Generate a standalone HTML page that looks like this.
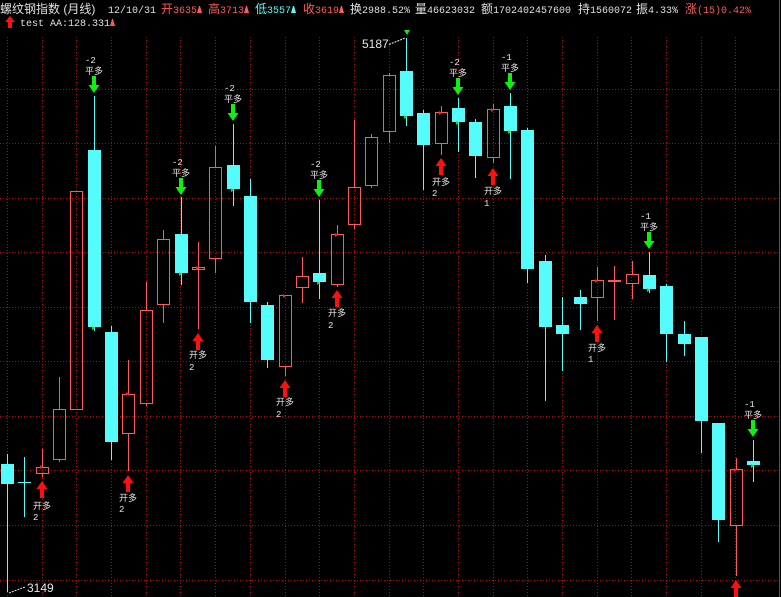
<!DOCTYPE html>
<html><head><meta charset="utf-8">
<style>
html,body{margin:0;padding:0;background:#000;width:781px;height:597px;overflow:hidden}
svg{display:block}
.t{font-family:"Liberation Mono","Noto Sans CJK SC",monospace;font-size:10px}
.c{font-family:"Liberation Sans","Noto Sans CJK SC",sans-serif;font-size:12px}
.s{font-family:"Liberation Sans","Noto Sans CJK SC",sans-serif;font-size:9px;fill:#e6e6e6}
.n{font-family:"Liberation Mono",monospace;font-size:9px;fill:#e6e6e6}
</style></head><body>
<svg width="781" height="597" viewBox="0 0 781 597" xmlns="http://www.w3.org/2000/svg">
<rect width="781" height="597" fill="#000"/>
<g stroke="#c80000" stroke-width="1" stroke-dasharray="1 2">
<path d="M0 89.5H779M0 143.5H779M0 198.5H779M0 252.5H779M0 307.5H779M0 361.5H779M0 416.5H779M0 470.5H779M0 525.5H779M0 580.5H779"/>
<path d="M7.5 37V597M42.5 37V597M76.5 37V597M111.5 37V597M146.5 37V597M180.5 37V597M215.5 37V597M250.5 37V597M285.5 37V597M319.5 37V597M354.5 37V597M389.5 37V597M423.5 37V597M458.5 37V597M493.5 37V597M527.5 37V597M562.5 37V597M597.5 37V597M631.5 37V597M666.5 37V597M701.5 37V597M735.5 37V597"/>
</g>
<line x1="779.5" y1="0" x2="779.5" y2="597" stroke="#d02020"/>

<g stroke="#54fcfc" fill="none">
<path d="M7.5 454V592M24.5 457V517M94.5 96V331M111.5 326V460M181.5 197V285M233.5 124V206M250.5 179V323M267.5 302V368M319.5 200V299M406.5 38V126M423.5 110V190M458.5 98V152M475.5 119V178M510.5 93V179M527.5 128V283M545.5 255V401M562.5 297V371M580.5 290V330M649.5 252V293M666.5 284V362M684.5 321V356M701.5 337V453M718.5 423V542M753.5 440V482"/>
<path d="M18 482.5H31"/>
</g>
<g fill="#54fcfc">
<rect x="1" y="464" width="13" height="20"/>
<rect x="88" y="150" width="13" height="177"/>
<rect x="105" y="332" width="13" height="110"/>
<rect x="175" y="234" width="13" height="39"/>
<rect x="227" y="165" width="13" height="24"/>
<rect x="244" y="196" width="13" height="106"/>
<rect x="261" y="305" width="13" height="55"/>
<rect x="313" y="273" width="13" height="9"/>
<rect x="400" y="71" width="13" height="45"/>
<rect x="417" y="113" width="13" height="32"/>
<rect x="452" y="108" width="13" height="14"/>
<rect x="469" y="122" width="13" height="34"/>
<rect x="504" y="106" width="13" height="25"/>
<rect x="521" y="130" width="13" height="139"/>
<rect x="539" y="261" width="13" height="66"/>
<rect x="556" y="325" width="13" height="9"/>
<rect x="574" y="297" width="13" height="7"/>
<rect x="643" y="275" width="13" height="14"/>
<rect x="660" y="286" width="13" height="48"/>
<rect x="678" y="334" width="13" height="10"/>
<rect x="695" y="337" width="13" height="84"/>
<rect x="712" y="423" width="13" height="97"/>
<rect x="747" y="461" width="13" height="4"/>
</g>

<g stroke="#ff5a5a" fill="none">
<path d="M42.5 449V467M42.5 473V477M59.5 377V409M59.5 459V462M128.5 360V394M128.5 433V471M146.5 282V310M146.5 403V406M163.5 230V239M163.5 304V323M198.5 242V329M215.5 146V167M215.5 258V273M285.5 366V376M302.5 257V276M302.5 287V303M337.5 225V234M337.5 284V287M354.5 120V187M354.5 224V229M371.5 134V137M371.5 185V188M389.5 73V75M389.5 131V143M441.5 106V112M441.5 143V155M493.5 104V109M493.5 157V163M597.5 267V280M597.5 297V321M614.5 266V320M632.5 261V274M632.5 283V299M736.5 458V469M736.5 525V576"/>
<rect x="36.5" y="467.5" width="12" height="6"/>
<rect x="53.5" y="409.5" width="12" height="50"/>
<rect x="70.5" y="191.5" width="12" height="218"/>
<rect x="122.5" y="394.5" width="12" height="39"/>
<rect x="140.5" y="310.5" width="12" height="93"/>
<rect x="157.5" y="239.5" width="12" height="65"/>
<rect x="192.5" y="267.5" width="12" height="2"/>
<rect x="209.5" y="167.5" width="12" height="91"/>
<rect x="279.5" y="295.5" width="12" height="71"/>
<rect x="296.5" y="276.5" width="12" height="11"/>
<rect x="331.5" y="234.5" width="12" height="50"/>
<rect x="348.5" y="187.5" width="12" height="37"/>
<rect x="365.5" y="137.5" width="12" height="48"/>
<rect x="383.5" y="75.5" width="12" height="56"/>
<rect x="435.5" y="112.5" width="12" height="31"/>
<rect x="487.5" y="109.5" width="12" height="48"/>
<rect x="591.5" y="280.5" width="12" height="17"/>
<rect x="626.5" y="274.5" width="12" height="9"/>
<rect x="730.5" y="469.5" width="12" height="56"/>
</g>
<rect x="608" y="280" width="13" height="2" fill="#ff5a5a"/>

<g fill="#ff2020">
<path d="M40 465l3 2-3 2z M126 392l3 2-3 2z M196 266l3 2-3 2z M335 233l3 2-3 2z M439 111l3 2-3 2z M491 108l3 2-3 2z M595 279l3 2-3 2z M734 468l3 2-3 2z M283 294l3 2-3 2z"/>
</g>
<g fill="#20e020">
<path d="M92 326l3 2-3 2z M179 272l3 2-3 2z M231 188l3 2-3 2z M317 281l3 2-3 2z M456 121l3 2-3 2z M508 130l3 2-3 2z M404 115l3 2-3 2z M647 288l3 2-3 2z M751 464l3 2-3 2z M404 30h6l-3 5z"/>
</g>

<g fill="#10f010">
<path d="M92 76h4v9h3.5l-5.5 8-5.5-8h3.5z"/>
<path d="M179 178h4v9h3.5l-5.5 8-5.5-8h3.5z"/>
<path d="M231 104h4v9h3.5l-5.5 8-5.5-8h3.5z"/>
<path d="M317 180h4v9h3.5l-5.5 8-5.5-8h3.5z"/>
<path d="M456 78h4v9h3.5l-5.5 8-5.5-8h3.5z"/>
<path d="M508 73h4v9h3.5l-5.5 8-5.5-8h3.5z"/>
<path d="M647 232h4v9h3.5l-5.5 8-5.5-8h3.5z"/>
<path d="M751 420h4v9h3.5l-5.5 8-5.5-8h3.5z"/>
</g>
<g class="n"><text x="85" y="63">-2</text><text x="172" y="165">-2</text><text x="224" y="91">-2</text><text x="310" y="167">-2</text><text x="449" y="65">-2</text><text x="501" y="60">-1</text><text x="640" y="219">-1</text><text x="744" y="407">-1</text></g>
<g class="s"><text x="85" y="74">平多</text><text x="172" y="176">平多</text><text x="224" y="102">平多</text><text x="310" y="178">平多</text><text x="449" y="76">平多</text><text x="501" y="71">平多</text><text x="640" y="230">平多</text><text x="744" y="418">平多</text></g>

<g fill="#ff1010">
<path d="M40 498h4v-9h3.5l-5.5-8-5.5 8h3.5z"/>
<path d="M126 492h4v-9h3.5l-5.5-8-5.5 8h3.5z"/>
<path d="M196 350h4v-9h3.5l-5.5-8-5.5 8h3.5z"/>
<path d="M283 397h4v-9h3.5l-5.5-8-5.5 8h3.5z"/>
<path d="M335 307h4v-9h3.5l-5.5-8-5.5 8h3.5z"/>
<path d="M439 175h4v-9h3.5l-5.5-8-5.5 8h3.5z"/>
<path d="M491 185h4v-9h3.5l-5.5-8-5.5 8h3.5z"/>
<path d="M595 342h4v-9h3.5l-5.5-8-5.5 8h3.5z"/>
<path d="M734 597h4v-9h3.5l-5.5-8-5.5 8h3.5z"/>
<path d="M8 28h4v-6h3l-5-6-5 6h3z"/>
</g>
<g class="s"><text x="33" y="509">开多</text><text x="119" y="501">开多</text><text x="189" y="358">开多</text><text x="276" y="405">开多</text><text x="328" y="316">开多</text><text x="432" y="185">开多</text><text x="484" y="194">开多</text><text x="588" y="351">开多</text></g>
<g class="n"><text x="33" y="520">2</text><text x="119" y="512">2</text><text x="189" y="370">2</text><text x="276" y="417">2</text><text x="328" y="328">2</text><text x="432" y="196">2</text><text x="484" y="206">1</text><text x="588" y="362">1</text></g>

<text x="362" y="48" fill="#e6e6e6" style="font-family:'Liberation Sans',sans-serif;font-size:12px">5187</text>
<path d="M389 44.5L405 38" stroke="#e6e6e6" stroke-dasharray="2 1"/>
<text x="27" y="592" fill="#e6e6e6" style="font-family:'Liberation Sans',sans-serif;font-size:12px">3149</text>
<path d="M9 593L25 587" stroke="#e6e6e6" stroke-dasharray="2 1"/>

<g class="c" fill="#e0e0e0">
<text x="0" y="13">螺纹钢指数 (月线)</text>
<text x="161" y="13" fill="#ff5a5a">开</text>
<text x="208" y="13" fill="#ff5a5a">高</text>
<text x="255" y="13" fill="#54fcfc">低</text>
<text x="303" y="13" fill="#ff5a5a">收</text>
<text x="350" y="13">换</text>
<text x="415" y="13">量</text>
<text x="481" y="13">额</text>
<text x="578" y="13">持</text>
<text x="636" y="13">振</text>
<text x="685" y="13" fill="#ff5a5a">涨</text>
</g>
<g class="t" fill="#e0e0e0">
<text x="108" y="13">12/10/31</text>
<text x="173" y="13" fill="#ff5a5a">3635</text>
<text x="220" y="13" fill="#ff5a5a">3713</text>
<text x="267" y="13" fill="#54fcfc">3557</text>
<text x="315" y="13" fill="#ff5a5a">3619</text>
<text x="362" y="13">2988.52%</text>
<text x="427" y="13">46623032</text>
<text x="493" y="13">1702402457600</text>
<text x="590" y="13">1560072</text>
<text x="648" y="13">4.33%</text>
<text x="697" y="13" fill="#ff5a5a">(15)0.42%</text>
<text x="20" y="26">test AA:128.331</text>
</g>
<g fill="#ff5a5a">
<path d="M197 13l2-7h1l2 7z M244 13l2-7h1l2 7z M339 13l2-7h1l2 7z M110 26l2-7h1l2 7z"/>
</g>
<path d="M291 13l2-7h1l2 7z" fill="#54fcfc"/>
</svg>
</body></html>
